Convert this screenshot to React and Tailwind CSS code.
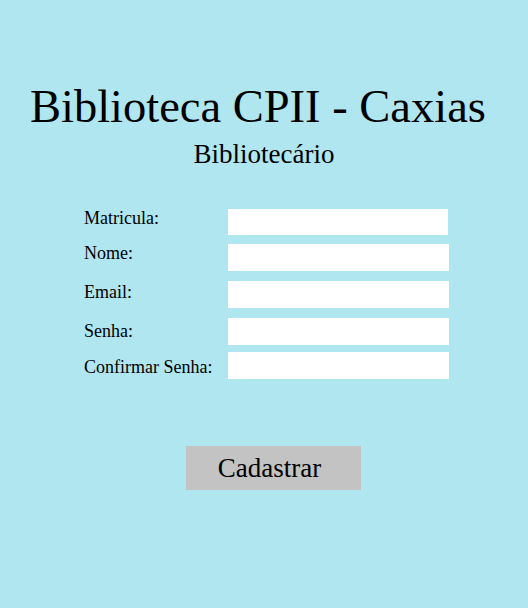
export default function App() {
  const rows = [
    { label: "Matricula:", mt: "mt-0", pt: "pt-0", h: "h-[26px]", w: "w-[220px]" },
    { label: "Nome:", mt: "mt-[9px]", pt: "pt-0", h: "h-[27px]", w: "w-[221px]" },
    { label: "Email:", mt: "mt-[10px]", pt: "pt-[2px]", h: "h-[27px]", w: "w-[221px]" },
    { label: "Senha:", mt: "mt-[10px]", pt: "pt-[4px]", h: "h-[27px]", w: "w-[221px]" },
    { label: "Confirmar Senha:", mt: "mt-[7px]", pt: "pt-[6px]", h: "h-[27px]", w: "w-[221px]" },
  ];
  return (
    <div className="w-[528px] h-[608px] bg-[#b0e6f0] font-['Liberation_Serif',serif] text-black flex flex-col overflow-hidden">
      <h1 className="mt-[83px] pl-[30px] text-[46.5px] leading-[47px] whitespace-nowrap">
        Biblioteca CPII - Caxias
      </h1>
      <h2 className="mt-[11px] text-center text-[27px] leading-[27px]">Bibliotecário</h2>
      <div className="mt-[41px] flex flex-col">
        {rows.map((r) => (
          <div key={r.label} className={`flex items-start ${r.mt}`}>
            <label className={`w-[228px] pl-[84px] text-[18px] leading-[18px] whitespace-nowrap ${r.pt}`}>
              {r.label}
            </label>
            <input className={`${r.h} ${r.w} bg-white border-0 outline-none`} type="text" />
          </div>
        ))}
      </div>
      <div className="mt-[67px] pl-[186px]">
        <button className="w-[175px] h-[44px] bg-[#c3c3c3] text-[27px] leading-[27px] pr-[8px]">
          Cadastrar
        </button>
      </div>
    </div>
  );
}
